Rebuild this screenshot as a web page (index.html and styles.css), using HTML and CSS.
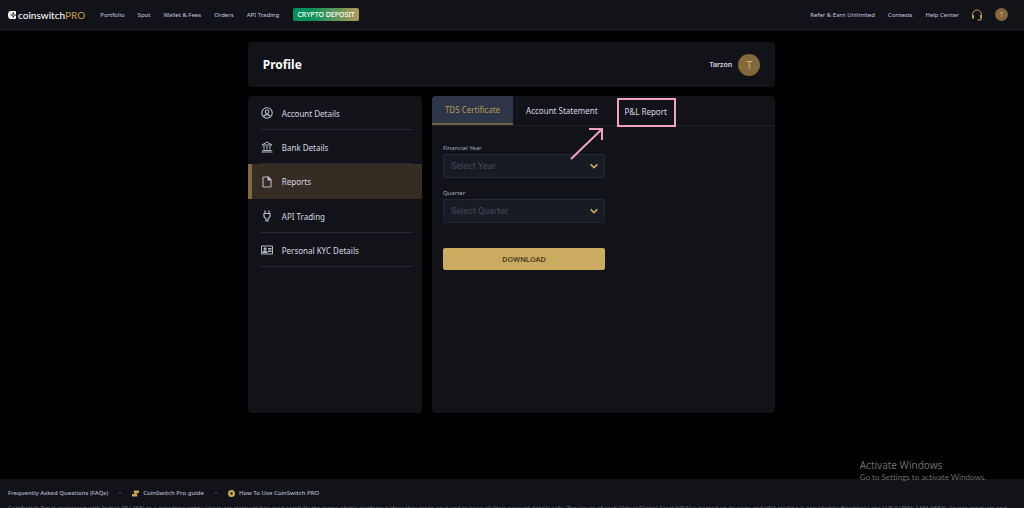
FILE: index.html
```html
<!DOCTYPE html>
<html lang="en">
<head>
<meta charset="utf-8">
<title>Profile - CoinSwitch PRO</title>
<link rel="stylesheet" href="styles.css">
</head>
<body>
<header class="topbar">
  <a class="logo" href="#">
    <svg class="logo-mark" viewBox="0 0 16 16"><path d="M7 0h7a2 2 0 0 1 2 2v4h-4V3H9v4H5v2h4v4h3v-3h4v4a2 2 0 0 1-2 2H7A6 6 0 0 1 0 10V6A6 6 0 0 1 7 0Z" fill="#fff"/><path d="M9 7h7v2H9z" fill="#fff"/></svg>
    <span class="logo-text">coinswitch<span class="logo-pro">PRO</span></span>
  </a>
  <nav class="nav">
    <a href="#">Portfolio</a>
    <a href="#">Spot</a>
    <a href="#">Wallet &amp; Fees</a>
    <a href="#">Orders</a>
    <a href="#">API Trading</a>
  </nav>
  <button class="deposit" type="button">CRYPTO DEPOSIT</button>
  <nav class="nav nav-right">
    <a href="#">Refer &amp; Earn Unlimited</a>
    <a href="#">Contests</a>
    <a href="#">Help Center</a>
  </nav>
  <button class="support" type="button" aria-label="Support">
    <svg viewBox="0 0 24 24" fill="none" stroke="#c39b50" stroke-width="2"><path d="M3 14v-3a9 9 0 0 1 18 0v8a3 3 0 0 1-3 3h-5"/><path d="M2 12h4v7H2zM18 12h4v7h-4z" fill="#c39b50" stroke="none"/></svg>
  </button>
  <button class="avatar avatar-small" type="button">T</button>
</header>

<main class="page">
  <section class="card heading">
    <h1>Profile</h1>
    <span class="user">Tarzon</span>
    <span class="avatar">T</span>
  </section>
  <div class="columns">
    <nav class="card side">
      <a class="side-item" href="#">
        <svg viewBox="0 0 24 24" fill="none" stroke="currentColor" stroke-width="2.200"><circle cx="12" cy="12" r="10.500"/><circle cx="12" cy="9.500" r="3.500"/><path d="M5 19c3-5 11-5 14 0"/></svg>
        <span>Account Details</span>
      </a>
      <a class="side-item" href="#">
        <svg viewBox="0 0 24 24" fill="none" stroke="currentColor" stroke-width="2"><path d="M2 8 12 2l10 6z"/><path d="M1 22h22M3 19h18M6 10v7M12 10v7M18 10v7"/></svg>
        <span>Bank Details</span>
      </a>
      <a class="side-item active" href="#">
        <svg viewBox="0 0 24 24" fill="none" stroke="currentColor" stroke-width="2.200" stroke-linejoin="round"><path d="M14 2H5a1 1 0 0 0-1 1v18a1 1 0 0 0 1 1h14a1 1 0 0 0 1-1V8z"/><path d="M14 2v6h6z" fill="currentColor"/></svg>
        <span>Reports</span>
      </a>
      <a class="side-item" href="#">
        <svg viewBox="0 0 24 24" fill="none" stroke="currentColor" stroke-width="2.400"><path d="M8 1v6M16 1v6M6 7h12v6l-4 5v4h-4v-4l-4-5z"/></svg>
        <span>API Trading</span>
      </a>
      <a class="side-item" href="#">
        <svg viewBox="0 0 24 24" fill="none" stroke="currentColor" stroke-width="2"><path d="M1 4h22v16H1z"/><path d="M14 9h7M14 12h7M14 15h7"/><circle cx="8" cy="9.500" r="3" fill="currentColor" stroke="none"/><path d="M3 18v-3c2-3 8-3 10 0v3z" fill="currentColor" stroke="none"/></svg>
        <span>Personal KYC Details</span>
      </a>
    </nav>
    <section class="card content">
      <div class="tabs" role="tablist">
        <button class="tab selected" type="button" role="tab" aria-selected="true">TDS Certificate</button>
        <button class="tab" type="button" role="tab">Account Statement</button>
        <button class="tab marked" type="button" role="tab">P&amp;L Report
          <svg class="arrow" viewBox="0 0 34 33" fill="none" stroke="#f0a3bd" stroke-width="2"><path d="M1 32 32 2M19 2h13v11"/></svg>
        </button>
      </div>
      <form class="form">
        <label for="year">Financial Year</label>
        <div class="select-box">
          <select id="year"><option>Select Year</option></select>
          <svg viewBox="0 0 12 12" fill="none" stroke="#c9a557" stroke-width="2"><path d="m2 4 4 4 4-4"/></svg>
        </div>
        <label for="quarter">Quarter</label>
        <div class="select-box">
          <select id="quarter"><option>Select Quarter</option></select>
          <svg viewBox="0 0 12 12" fill="none" stroke="#c9a557" stroke-width="2"><path d="m2 4 4 4 4-4"/></svg>
        </div>
        <button class="download" type="button">DOWNLOAD</button>
      </form>
    </section>
  </div>
</main>

<footer class="footer">
  <div class="links">
    <a href="#">Frequently Asked Questions (FAQs)</a>
    <i class="dot"></i>
    <a href="#"><svg viewBox="0 0 12 12" fill="#c9a557"><path d="M3 1h9v4H3zM0 7h9v4H0zM4 5h4v2H4z"/></svg>CoinSwitch Pro guide</a>
    <i class="dot"></i>
    <a href="#"><svg viewBox="0 0 12 12" fill="none" stroke="#c9a557" stroke-width="4"><circle cx="6" cy="6" r="4"/></svg>How To Use CoinSwitch PRO</a>
  </div>
  <p class="legal">CoinSwitch Pro is registered with India's FIU-IND as a reporting entity. Users are instructed to read carefully the terms of this platform before they trade on it and to keep all their account details safe. The issuer of each Virtual Digital Asset (VDA) is named on its page and VDA trading is provided by Bitcipher Labs LLP (LLPIN: AAM-6582). Crypto products and NFTs are unregulated and can be highly risky.</p>
</footer>

<aside class="watermark">
  <p class="watermark-title">Activate Windows</p>
  <p class="watermark-note">Go to Settings to activate Windows.</p>
</aside>
</body>
</html>
```
FILE: styles.css
```css
* { box-sizing: border-box; }
body {
  margin: 0;
  height: 100vh;
  overflow: hidden;
  display: flex;
  flex-direction: column;
  background: #000;
  color: #d6d8e2;
  font-family: "Noto Sans", "Open Sans", sans-serif;
  font-size: 8px;
}
a { color: inherit; text-decoration: none; }
button { border: 0; padding: 0; background: none; color: inherit; font: inherit; }
p, h1 { margin: 0; }
svg { flex: none; display: block; }

.topbar {
  flex: none;
  display: flex;
  align-items: center;
  padding: 6px 16px 8px 8px;
  height: 31px;
  background: #121318;
  color: #c6cae0;
  font-size: 6px;
}
.logo { display: flex; align-items: center; gap: 2px; margin-right: 15px; color: #fff; }
.logo-mark { width: 8px; height: 8px; }
.logo-text { font: 500 10px/14px Lato, sans-serif; }
.logo-pro { color: #bd9145; }
.nav { display: flex; gap: 13px; white-space: nowrap; }
.nav-right { margin-left: auto; }
.deposit {
  width: 66px;
  height: 13px;
  margin-left: 14px;
  border-radius: 2px;
  background: linear-gradient(90deg, #03905c 25%, #b39a58);
  color: #fff;
  font-size: 7px;
  font-weight: 500;
  line-height: 13px;
  white-space: nowrap;
}
.support { margin: 0 12px; }
.support svg { width: 12px; height: 12px; }
.avatar {
  flex: none;
  display: grid;
  place-items: center;
  width: 22px;
  height: 22px;
  border-radius: 50%;
  background: #82683a;
  color: #d0ae68;
  font-size: 10px;
}
.avatar-small { width: 13px; height: 13px; font-size: 7px; }

.page { flex: 1; width: 52%; min-width: 527px; max-width: 1000px; margin: 0 auto; padding: 11px 3px 0 2px; }
.card { background: #121318; border-radius: 4px; }
.heading { display: flex; align-items: center; height: 45px; padding: 0 15px; margin-bottom: 9px; }
h1 { flex: 1; color: #fff; font-size: 12px; line-height: 18px; }
.user { margin-right: 6px; font-weight: 600; font-size: 7px; }
.columns { display: grid; grid-template-columns: 174fr 343fr; gap: 10px; height: 317px; }

.side { display: flex; flex-direction: column; }
.side-item {
  position: relative;
  display: flex;
  align-items: center;
  gap: 9px;
  padding: 0 13px;
  height: 34px;
}
.side-item svg { width: 12px; height: 12px; color: #b6bac8; }
.side-item::after {
  content: "";
  position: absolute;
  left: 12px;
  right: 9px;
  bottom: 0;
  height: 1px;
  background: #25262f;
}
.side-item.active { height: 35px; padding-left: 9px; border-left: 4px solid #82683a; background: #352d24; }
.side-item.active::after { display: none; }

.tabs { display: flex; height: 30px; border-bottom: 1px solid #202127; }
.tab { padding: 0 13px; white-space: nowrap; }
.tab.selected {
  border-bottom: 2px solid #6f6046;
  border-radius: 4px 0 0 0;
  background: #2e3549;
  color: #b9954f;
}
.marked {
  position: relative;
  z-index: 1;
  align-self: flex-start;
  height: 29px;
  margin: 2px 0 0 6px;
  padding: 0 7px 3px 6px;
  border: 2px solid #f0a3bd;
}
.arrow { position: absolute; right: 70px; top: 27px; width: 34px; height: 33px; }

.form { width: 54%; padding: 17px 12px 17px 11px; }
.form label { display: block; color: #a4aac2; font-size: 6px; line-height: 10px; }
.select-box { position: relative; margin: 1px 0 10px; }
.select-box select {
  display: block;
  width: 100%;
  height: 24px;
  padding: 0 7px;
  appearance: none;
  border: 1px solid #202838;
  border-radius: 2px;
  background: #171b23;
  color: #434958;
  font: 9px Roboto, sans-serif;
}
.select-box svg { position: absolute; right: 6px; top: 7px; width: 10px; height: 10px; }
.download {
  width: 100%;
  height: 22px;
  margin-top: 15px;
  border-radius: 2px;
  background: #cbab60;
  color: #4a3c26;
  font: 500 8px Roboto, sans-serif;
}

.footer { flex: none; height: 29px; overflow: hidden; padding: 8px 8px 0; background: #121318; color: #b4b9d0; }
.links { display: flex; align-items: center; font-size: 6px; font-weight: 500; line-height: 12px; white-space: nowrap; }
.links a { display: flex; align-items: center; gap: 4px; }
.links svg { width: 7px; height: 7px; }
.dot { width: 2px; height: 2px; margin: 0 11px; border-radius: 50%; background: #3d4255; }
.legal { margin-top: 4px; color: #6b6f82; font-size: 6px; line-height: 10px; }

.watermark { position: absolute; right: 38px; bottom: 25px; color: #6b6c70; }
.watermark-title { font-size: 10px; line-height: 14px; }
.watermark-note { font: 8px/11px Lato, sans-serif; font-variant-ligatures: none; }
```
